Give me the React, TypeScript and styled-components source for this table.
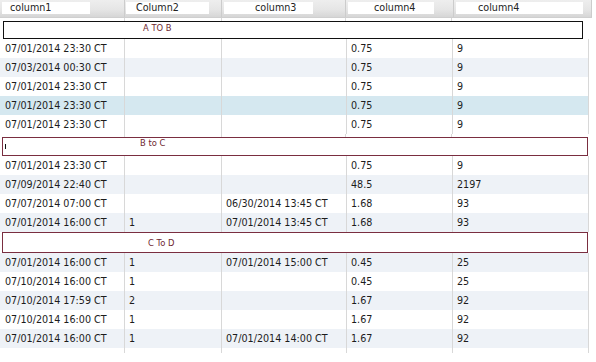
import React from "react";
import styled, { createGlobalStyle } from "styled-components";

const Global = createGlobalStyle`
  html, body { margin: 0; padding: 0; background: #ffffff; }
  body { font-family: "DejaVu Sans", Verdana, sans-serif; }
`;

const COLS = "125px 97px 125px 106px 136px";

const Grid = styled.div`
  width: 596px;
  font-family: "DejaVu Sans", Verdana, sans-serif;
  font-size: 9.6px;
  color: #1c1c1c;
`;

const HeaderRow = styled.div`
  display: grid;
  grid-template-columns: 125px 97px 124px 108px 138px;
  height: 17px;
  width: 592px;
  background: linear-gradient(#eeeeee 0%, #e6e6e6 55%, #d6d6d6 100%);
  border-bottom: 1px solid #cfcfcf;
`;

const HeaderCell = styled.div`
  box-sizing: border-box;
  border-right: 1px solid #cccccc;
  padding-top: 2px;
`;

const HeaderLabel = styled.div<{ $w: number; $pad: number; $ml: number }>`
  margin-left: ${(p) => p.$ml}px;
  width: ${(p) => p.$w}px;
  height: 12px;
  line-height: 12px;
  padding-left: ${(p) => p.$pad}px;
  box-sizing: border-box;
  background: #ffffff;
  color: #222;
  white-space: nowrap;
`;

const GroupRow = styled.div<{ $top: number; $left: number }>`
  width: 590px;
  padding-top: ${(p) => p.$top}px;
  padding-left: ${(p) => p.$left}px;
  box-sizing: border-box;
  background-image: linear-gradient(#d8d8d8, #d8d8d8), linear-gradient(#d8d8d8, #d8d8d8),
    linear-gradient(#d8d8d8, #d8d8d8), linear-gradient(#d8d8d8, #d8d8d8);
  background-size: 1px 100%;
  background-repeat: no-repeat;
  background-position: 124px 0, 221px 0, 345px 0, 451px 0;
`;

const GroupBox = styled.div<{
  $w: number;
  $h: number;
  $dark?: boolean;
  $textPad: number;
  $textTop: number;
}>`
  position: relative;
  width: ${(p) => p.$w}px;
  height: ${(p) => p.$h}px;
  box-sizing: border-box;
  background: #ffffff;
  border: ${(p) => (p.$dark ? "1.5px solid #111111" : "1px solid #7a2e40")};
  padding-left: ${(p) => p.$textPad}px;
  padding-top: ${(p) => p.$textTop}px;
  font-size: 8.4px;
  line-height: 10px;
  color: #6e1f30;
  white-space: nowrap;
`;

const Caret = styled.span`
  position: absolute;
  left: 2px;
  top: 6px;
  width: 1px;
  height: 5px;
  background: #111111;
`;

const DataRow = styled.div<{ $tone: "plain" | "alt" | "sel" }>`
  display: grid;
  grid-template-columns: ${COLS};
  width: 589px;
  height: 19px;
  background: ${(p) =>
    p.$tone === "alt" ? "#eef2f7" : p.$tone === "sel" ? "#d5e8f0" : "#ffffff"};
`;

const Cell = styled.div`
  box-sizing: border-box;
  border-right: 1px solid #d8d8d8;
  padding-left: 4px;
  line-height: 19px;
  white-space: nowrap;
  overflow: hidden;
  &:first-child {
    padding-left: 5px;
  }
`;

const Tail = styled.div`
  display: grid;
  grid-template-columns: ${COLS};
  width: 589px;
  height: 5px;
`;

type Tone = "plain" | "alt" | "sel";
type Row = { cells: string[]; tone: Tone };

const headers = [
  { t: "column1", w: 88, pad: 8, ml: 2 },
  { t: "Column2", w: 83, pad: 10, ml: 1 },
  { t: "column3", w: 89, pad: 31, ml: 2 },
  { t: "column4", w: 86, pad: 26, ml: 2 },
  { t: "column4", w: 127, pad: 22, ml: 2 },
];

const groups: {
  title: string;
  top: number;
  left: number;
  w: number;
  h: number;
  dark?: boolean;
  textPad: number;
  textTop: number;
  caret?: boolean;
  rows: Row[];
}[] = [
  {
    title: "A TO B",
    top: 3,
    left: 3,
    w: 580,
    h: 18,
    dark: true,
    textPad: 139,
    textTop: 1,
    rows: [
      { cells: ["07/01/2014 23:30 CT", "", "", "0.75", "9"], tone: "plain" },
      { cells: ["07/03/2014 00:30 CT", "", "", "0.75", "9"], tone: "alt" },
      { cells: ["07/01/2014 23:30 CT", "", "", "0.75", "9"], tone: "plain" },
      { cells: ["07/01/2014 23:30 CT", "", "", "0.75", "9"], tone: "sel" },
      { cells: ["07/01/2014 23:30 CT", "", "", "0.75", "9"], tone: "plain" },
    ],
  },
  {
    title: "B to C",
    top: 3,
    left: 2,
    w: 586,
    h: 19,
    textPad: 137,
    textTop: 0,
    caret: true,
    rows: [
      { cells: ["07/01/2014 23:30 CT", "", "", "0.75", "9"], tone: "plain" },
      { cells: ["07/09/2014 22:40 CT", "", "", "48.5", "2197"], tone: "alt" },
      {
        cells: ["07/07/2014 07:00 CT", "", "06/30/2014 13:45 CT", "1.68", "93"],
        tone: "plain",
      },
      {
        cells: ["07/01/2014 16:00 CT", "1", "07/01/2014 13:45 CT", "1.68", "93"],
        tone: "alt",
      },
    ],
  },
  {
    title: "C To D",
    top: 0,
    left: 2,
    w: 586,
    h: 21,
    textPad: 145,
    textTop: 5,
    rows: [
      {
        cells: ["07/01/2014 16:00 CT", "1", "07/01/2014 15:00 CT", "0.45", "25"],
        tone: "alt",
      },
      { cells: ["07/10/2014 16:00 CT", "1", "", "0.45", "25"], tone: "plain" },
      { cells: ["07/10/2014 17:59 CT", "2", "", "1.67", "92"], tone: "alt" },
      { cells: ["07/10/2014 16:00 CT", "1", "", "1.67", "92"], tone: "plain" },
      {
        cells: ["07/01/2014 16:00 CT", "1", "07/01/2014 14:00 CT", "1.67", "92"],
        tone: "alt",
      },
    ],
  },
];

export default function App() {
  return (
    <>
      <Global />
      <Grid>
        <HeaderRow>
          {headers.map((h, i) => (
            <HeaderCell key={i}>
              <HeaderLabel $w={h.w} $pad={h.pad} $ml={h.ml}>
                {h.t}
              </HeaderLabel>
            </HeaderCell>
          ))}
        </HeaderRow>
        {groups.map((g) => (
          <React.Fragment key={g.title}>
            <GroupRow $top={g.top} $left={g.left}>
              <GroupBox
                $w={g.w}
                $h={g.h}
                $dark={g.dark}
                $textPad={g.textPad}
                $textTop={g.textTop}
              >
                {g.caret && <Caret />}
                {g.title}
              </GroupBox>
            </GroupRow>
            {g.rows.map((r, ri) => (
              <DataRow key={ri} $tone={r.tone}>
                {r.cells.map((c, ci) => (
                  <Cell key={ci}>{c}</Cell>
                ))}
              </DataRow>
            ))}
          </React.Fragment>
        ))}
        <Tail>
          {[0, 1, 2, 3, 4].map((i) => (
            <Cell key={i} />
          ))}
        </Tail>
      </Grid>
    </>
  );
}
